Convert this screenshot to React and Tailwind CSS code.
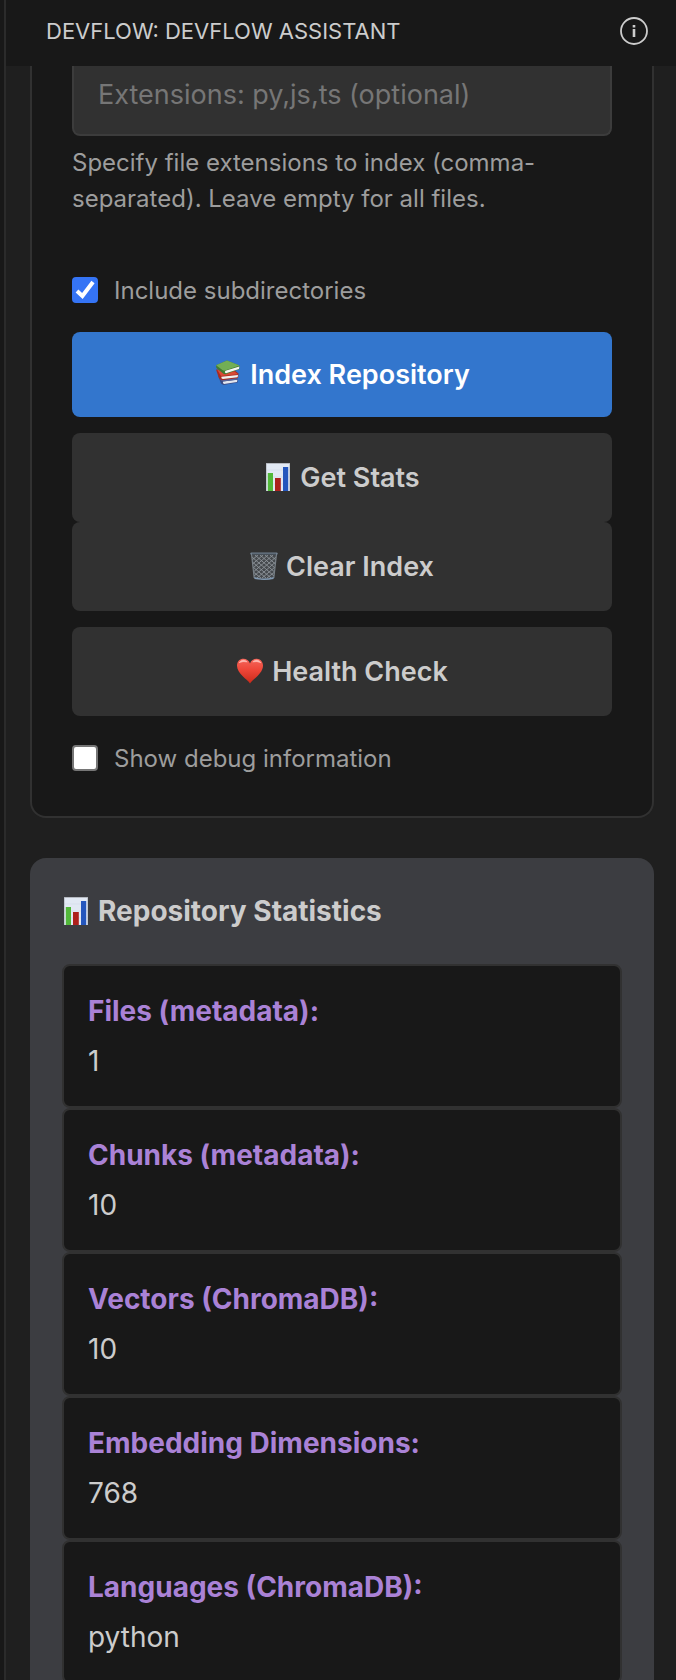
import React from "react";

function BooksIcon() {
  return (
    <svg viewBox="0 0 28 28" className="size-7 shrink-0" aria-hidden="true">
      <path d="M4 15.5 L22 16.5 L24 19.4 L23.6 22.6 L9.4 25 L7 23.6 Z" fill="#3a4a84" />
      <path d="M9 21.6 L23.4 19.8 L23 22 L10 24 Q8.4 23.4 9 21.6 Z" fill="#e4e7ef" />
      <path d="M5.6 19.4 L21 17 L24 19.4 L9 21.4 Z" fill="#56649a" />
      <path d="M2 9.4 L20 10 L24.6 13.6 L24 18 L8 20.2 L5 18.2 Z" fill="#aa2a20" />
      <path d="M7.4 16.8 L24 15 L23.6 17.2 L8.8 19 Q6.8 18.8 7.4 16.8 Z" fill="#f2f1ee" />
      <path d="M3.4 10 L7 16 L24.2 14.2 L20 11.2 Z" fill="#d94a35" />
      <path d="M2 5.2 L13 .6 L25.6 5.6 L25.3 9.2 L11.6 14.2 Q9.8 14.4 8.8 13.2 L2.4 8 Z" fill="#437a30" />
      <path d="M11.4 10.8 L25.4 6.6 L25 9 L12 13.2 Q10 12.8 11.4 10.8 Z" fill="#f6f6f2" />
      <path d="M2 5.2 L13 .6 L25.6 5.6 L11 10.6 Q9.4 10.9 8.4 10 Z" fill="#72ae55" />
    </svg>
  );
}

function ChartIcon() {
  return (
    <svg viewBox="0 0 28 28" className="size-7 shrink-0" aria-hidden="true">
      <rect x="2" y="0" width="24" height="28" fill="#e2e9f4" />
      <path d="M2 7H26M2 14H26M2 21H26" stroke="#d3dcea" strokeWidth=".6" />
      <path d="M2 .5H26" stroke="#b5b9c0" />
      <rect x="3.8" y="10" width="5.2" height="18" fill="#52b83a" />
      <rect x="11" y="15" width="5.8" height="13" fill="#ad211c" />
      <rect x="19" y="4" width="5.2" height="24" fill="#2456bd" />
      <path d="M2.5 0V28M25.5 0V28" stroke="#aeb3bb" strokeWidth=".6" />
    </svg>
  );
}

function TrashIcon() {
  return (
    <svg viewBox="0 0 28 28" className="size-7 shrink-0" aria-hidden="true">
      <path d="M1.5 2 L26.5 2 L23.8 26 Q14 29 4.2 26 Z" fill="#45494d" />
      <path
        d="M2 8 L8 3 M2.6 12 L13 3 M3 16 L18 3 M3.4 20 L23 3 M4 24 L26 5 M7 26 L25.6 10 M12 26 L25 15 M17 26 L24.6 20 M26 8 L20 3 M25.4 12 L15 3 M25 16 L10 3 M24.6 20 L5 3 M24 24 L2 5 M21 26 L2.4 10 M16 26 L3 15 M11 26 L3.4 20"
        stroke="#8f959b"
        strokeWidth=".9"
      />
      <path d="M1.5 2 L4.2 26 M26.5 2 L23.8 26" stroke="#777f86" strokeWidth="1.2" />
      <path d="M4.4 25 Q14 28.2 23.6 25 V27 Q14 28.8 4.4 27 Z" fill="#8198b0" />
      <rect x=".3" y=".4" width="27.4" height="2.4" rx="1.2" fill="#71808f" />
      <path d="M2 2.2H26" stroke="#343b42" strokeWidth=".9" />
    </svg>
  );
}

function HeartIcon() {
  return (
    <svg viewBox="0 0 28 28" className="size-7 shrink-0" aria-hidden="true">
      <defs>
        <linearGradient id="heart" x1="0" y1="0" x2="0" y2="1">
          <stop offset="0" stopColor="#f4665a" />
          <stop offset=".45" stopColor="#ee4638" />
          <stop offset="1" stopColor="#c92a1a" />
        </linearGradient>
      </defs>
      <path
        d="M14 26.5 C11.5 22.5 1 16.5 1 8.8 C1 4.4 4 1.8 7.4 1.8 C10.4 1.8 12.8 3.4 14 6.4 C15.2 3.4 17.6 1.8 20.6 1.8 C24 1.8 27 4.4 27 8.8 C27 16.5 16.5 22.5 14 26.5 Z"
        fill="url(#heart)"
      />
      <path d="M3.2 5.6 Q7 1.2 11.2 4.8 Q7 3.8 3.2 5.6 Z M16.8 4.8 Q21 1.2 24.8 5.6 Q21 3.8 16.8 4.8 Z" fill="#ffd9d4" stroke="#ffb7ae" strokeWidth=".8" />
    </svg>
  );
}

function ActionButton({ icon, children }) {
  return (
    <button
      type="button"
      className="flex h-[89px] w-full items-center justify-center gap-2 rounded-lg bg-[#313131] pb-0.5 text-[27px] font-semibold text-[#cccccc]"
    >
      {icon}
      <span className="pt-[3px]">{children}</span>
    </button>
  );
}

function CheckRow({ id, label, defaultChecked }) {
  return (
    <div className="flex h-9 items-center gap-4">
      <span className="relative flex size-[26px] shrink-0">
        <input
          id={id}
          type="checkbox"
          defaultChecked={defaultChecked}
          className="peer size-full appearance-none rounded border-2 border-[#767676] bg-white checked:border-[#3574f5] checked:bg-[#3574f5]"
        />
        <svg
          viewBox="0 0 26 26"
          className="pointer-events-none absolute inset-0 hidden size-full peer-checked:block"
          aria-hidden="true"
        >
          <path d="M5 14 L10.4 19 L21 5" fill="none" stroke="#fff" strokeWidth="4" />
        </svg>
      </span>
      <label htmlFor={id} className="pt-0.5 text-2xl text-[#9d9d9d]">
        {label}
      </label>
    </div>
  );
}

const stats = [
  ["Files (metadata):", "1"],
  ["Chunks (metadata):", "10"],
  ["Vectors (ChromaDB):", "10"],
  ["Embedding Dimensions:", "768"],
  ["Languages (ChromaDB):", "python"],
];

export default function App() {
  return (
    <div className="flex h-screen bg-[#181818] pl-1 font-['Inter',sans-serif] text-[#cccccc]">
      <div className="flex min-w-0 flex-1 flex-col border-l-2 border-[#2b2b2b]">
        <header className="flex h-[66px] shrink-0 items-center justify-between pr-7 pb-1 pl-10">
          <h1 className="text-[22px]">DEVFLOW: DEVFLOW ASSISTANT</h1>
          <button type="button" aria-label="Information">
            <svg viewBox="0 0 28 28" className="size-7" aria-hidden="true">
              <circle cx="14" cy="14" r="13" fill="none" stroke="#cccccc" strokeWidth="1.8" />
              <path d="M12.7 12H15.3V20H12.7ZM12.7 8H15.3V10.4H12.7Z" fill="#cccccc" />
            </svg>
          </button>
        </header>

        <main className="min-h-0 flex-1 overflow-y-auto bg-[#1f1f1f] pr-[22px] pl-6 [scrollbar-width:none]">
          <section className="rounded-b-2xl border-2 border-t-0 border-[#313131] bg-[#181818] px-10 pb-10">
            <input
              type="text"
              aria-label="File extensions"
              aria-describedby="extensions-help"
              placeholder="Extensions: py,js,ts (optional)"
              className="block h-[70px] w-full rounded-b-lg border-2 border-t-0 border-[#3c3c3c] bg-[#313131] px-6 pb-3 text-[27px] placeholder:text-[#767676]"
            />
            <p id="extensions-help" className="mt-[9px] text-2xl leading-9 text-[#9d9d9d]">
              Specify file extensions to index (comma-separated). Leave empty for all files.
            </p>
            <div className="mt-[55px]">
              <CheckRow id="subdirectories" label="Include subdirectories" defaultChecked />
            </div>
            <button
              type="button"
              className="mt-6 flex h-[85px] w-full items-center justify-center gap-2 rounded-lg bg-[#3376cd] pb-0.5 text-[27px] font-semibold text-white"
            >
              <BooksIcon />
              <span className="pt-[3px]">Index Repository</span>
            </button>
            <div className="mt-4 flex flex-col">
              <ActionButton icon={<ChartIcon />}>Get Stats</ActionButton>
              <ActionButton icon={<TrashIcon />}>Clear Index</ActionButton>
            </div>
            <div className="mt-4">
              <ActionButton icon={<HeartIcon />}>Health Check</ActionButton>
            </div>
            <div className="mt-6">
              <CheckRow id="debug" label="Show debug information" />
            </div>
          </section>

          <section className="mt-10 rounded-2xl bg-[#3c3d41] p-8">
            <h2 className="flex h-[42px] items-center gap-2 text-[28px] font-bold">
              <ChartIcon />
              Repository Statistics
            </h2>
            <dl className="mt-8">
              {stats.map(([name, value]) => (
                <div key={name} className="h-36 rounded-lg border-2 border-[#313131] bg-[#181818] px-6 pt-6">
                  <dt className="text-[28px] leading-[42px] font-bold text-[#aa82d6]">{name}</dt>
                  <dd className="mt-2 text-[28px] leading-[42px]">{value}</dd>
                </div>
              ))}
            </dl>
          </section>
        </main>
      </div>
    </div>
  );
}
